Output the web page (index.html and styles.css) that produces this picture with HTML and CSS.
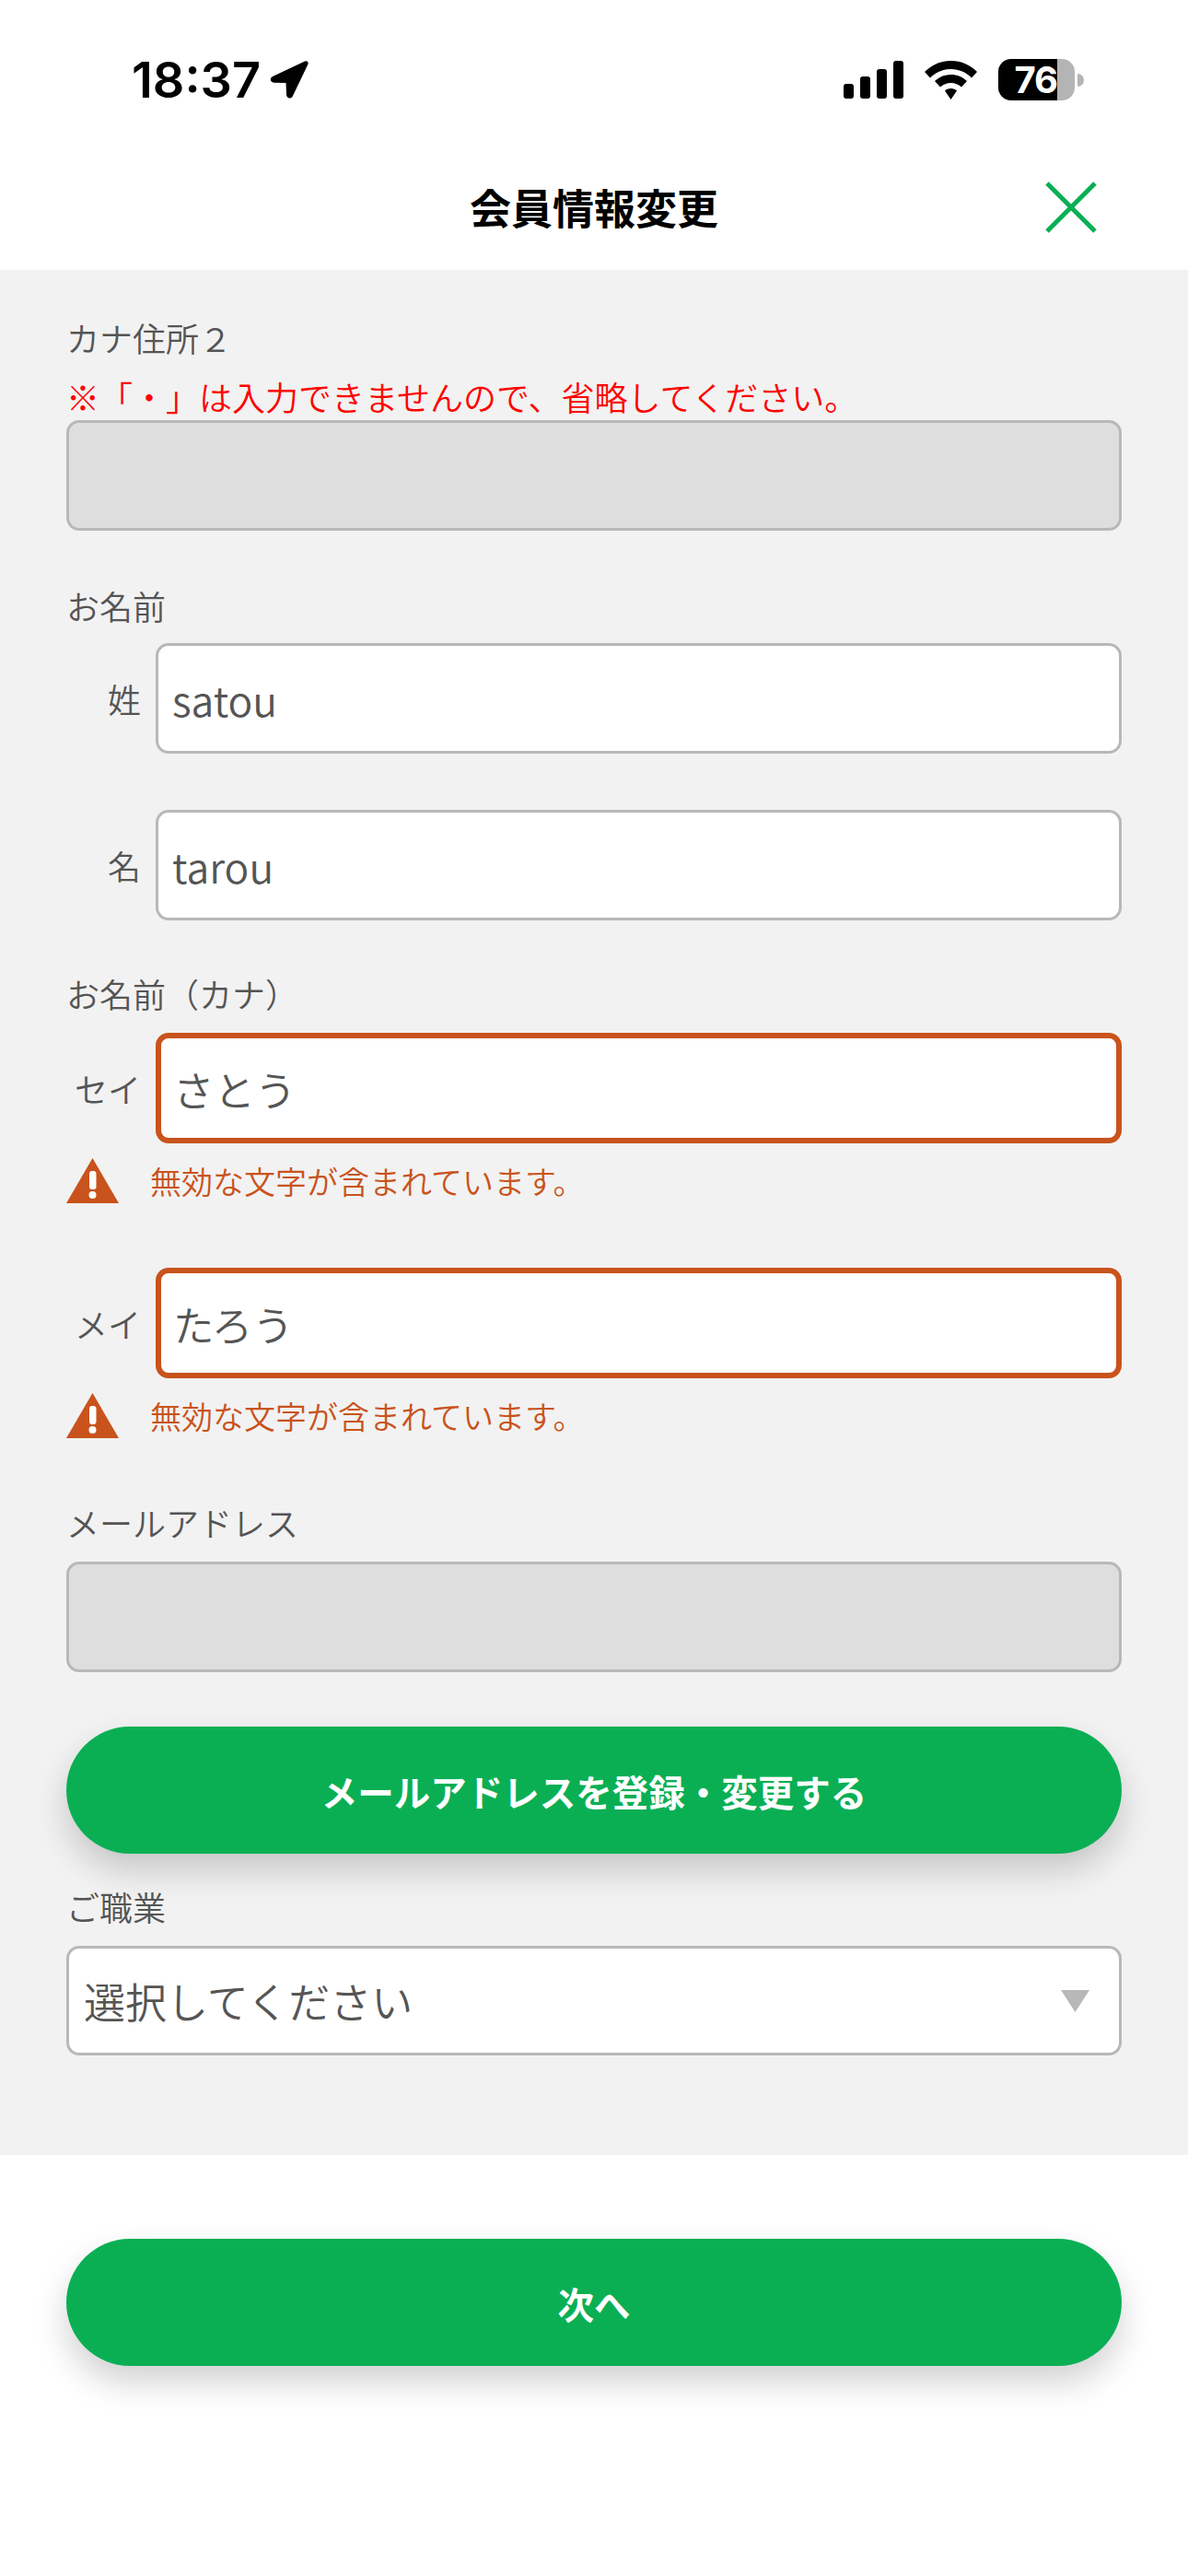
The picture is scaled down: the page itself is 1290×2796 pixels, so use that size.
FILE: index.html
```html
<!DOCTYPE html>
<html lang="ja">
<head>
    <meta charset="UTF-8">
    <meta name="viewport" content="width=device-width, initial-scale=1.0">
    <title>会員情報変更</title>
    <link rel="stylesheet" href="styles.css">
</head>
<body>
    <div class="statusBar">
        <div class="statusLeft">
            <span class="clock">18:37</span>
            <svg class="locationIcon" viewBox="0 0 42 41"><path d="M38 0.5 L3 17 C-0.5 18.8 0.3 23.6 4.5 23.7 L17.5 24 L18 36.5 C18.2 41.3 23.2 42 25 38 L41.3 4 C42.5 1.4 40.5 -0.6 38 0.5 Z"/></svg>
        </div>
        <div class="statusRight">
            <svg class="signalIcon" viewBox="0 0 65 41"><rect x="0" y="25" width="11" height="16" rx="3"/><rect x="18" y="17" width="11" height="24" rx="3"/><rect x="36" y="9" width="11" height="32" rx="3"/><rect x="54" y="0" width="11" height="41" rx="3"/></svg>
            <svg class="wifiIcon" viewBox="0 0 57 42"><path d="M28.5 0 C40 0 49.5 4.5 57 12 L51 18.5 C45 12.5 37.5 9 28.5 9 C19.5 9 12 12.5 6 18.5 L0 12 C7.5 4.5 17 0 28.5 0 Z"/><path d="M28.5 15 C35.5 15 41 17.5 46 22 L40 28.5 C36.5 25.5 33 24 28.5 24 C24 24 20.5 25.5 17 28.5 L11 22 C16 17.5 21.5 15 28.5 15 Z"/><path d="M28.5 30 C31.5 30 33.5 31 35 32.5 L28.5 42 L22 32.5 C23.5 31 25.5 30 28.5 30 Z"/></svg>
            <div class="battery">
                <div class="batteryBody"><span class="batteryLevel">76</span></div>
                <div class="batteryNub"></div>
            </div>
        </div>
    </div>

    <header class="titleBar">
        <h1>会員情報変更</h1>
        <svg class="closeIcon" viewBox="0 0 56 56"><path d="M2 2 L54 54 M54 2 L2 54"/></svg>
    </header>

    <main class="formArea">
        <div class="fieldLabel">カナ住所２</div>
        <div class="noteText">※「・」は入力できませんので、省略してください。</div>
        <div class="inputBox disabled"></div>

        <div class="fieldLabel groupLabel">お名前</div>
        <div class="nameRow">
            <span class="rowLabel">姓</span>
            <div class="inputBox">satou</div>
        </div>
        <div class="nameRow nextRow">
            <span class="rowLabel">名</span>
            <div class="inputBox">tarou</div>
        </div>

        <div class="fieldLabel kanaLabel">お名前（カナ）</div>
        <div class="nameRow">
            <span class="rowLabel">セイ</span>
            <div class="inputBox invalid">さとう</div>
        </div>
        <div class="errorRow">
            <svg class="warnIcon" viewBox="0 0 57 49"><path d="M28.5 0 L57 49 L0 49 Z" fill="#c9531c"/><rect x="25" y="14" width="7.5" height="20" rx="3" fill="#fff"/><circle cx="28.5" cy="40" r="4" fill="#fff"/></svg>
            <span class="errorText">無効な文字が含まれています。</span>
        </div>
        <div class="nameRow invalidNext">
            <span class="rowLabel">メイ</span>
            <div class="inputBox invalid">たろう</div>
        </div>
        <div class="errorRow">
            <svg class="warnIcon" viewBox="0 0 57 49"><path d="M28.5 0 L57 49 L0 49 Z" fill="#c9531c"/><rect x="25" y="14" width="7.5" height="20" rx="3" fill="#fff"/><circle cx="28.5" cy="40" r="4" fill="#fff"/></svg>
            <span class="errorText">無効な文字が含まれています。</span>
        </div>

        <div class="fieldLabel mailLabel">メールアドレス</div>
        <div class="inputBox disabled"></div>
        <button type="button" class="pillButton mailButton">メールアドレスを登録・変更する</button>

        <div class="fieldLabel jobLabel">ご職業</div>
        <div class="inputBox selectBox">
            <span>選択してください</span>
            <svg class="selectArrow" viewBox="0 0 31 24"><path d="M0 0 H31 L15.5 24 Z"/></svg>
        </div>
    </main>

    <footer class="footerArea">
        <button type="button" class="pillButton">次へ</button>
    </footer>
</body>
</html>
```

FILE: styles.css
```css
* {
    box-sizing: border-box;
}

body {
    font-family: "Noto Sans CJK JP", sans-serif;
    font-weight: 350;
    background-color: #ffffff;
    color: #555555;
    margin: 0;
    padding: 0;
}

.statusBar {
    display: flex;
    justify-content: space-between;
    align-items: center;
    height: 173px;
    padding: 0 113px 0 143px;
}

.statusLeft, .statusRight {
    display: flex;
    align-items: center;
}

.clock {
    font-family: Inter, sans-serif;
    font-size: 54px;
    font-weight: 600;
    color: #000000;
}

.locationIcon {
    width: 42px;
    height: 41px;
    margin-left: 10px;
}

.signalIcon {
    width: 65px;
    height: 41px;
}

.wifiIcon {
    width: 57px;
    height: 42px;
    margin-left: 23px;
}

.battery {
    display: flex;
    align-items: center;
    margin-left: 23px;
}

.batteryBody {
    width: 83px;
    height: 45px;
    border-radius: 14px;
    background: linear-gradient(to right, #000000 64px, #b4b4b4 64px);
}

.batteryLevel {
    display: block;
    width: 64px;
    text-align: right;
    font-family: Inter, sans-serif;
    font-size: 40px;
    font-weight: 700;
    letter-spacing: -1px;
    line-height: 45px;
    color: #ffffff;
}

.batteryNub {
    width: 7px;
    height: 14px;
    margin-left: 3px;
    border-radius: 0 7px 7px 0;
    background-color: #b4b4b4;
}

.titleBar {
    display: grid;
    grid-template-columns: 1fr auto 1fr;
    align-items: center;
    height: 120px;
    padding: 0 99px 16px 0;
}

.titleBar h1 {
    grid-column: 2;
    margin: 0 0 0 99px;
    font-size: 45px;
    font-weight: 700;
    line-height: 60px;
    color: #000000;
}

.closeIcon {
    grid-column: 3;
    justify-self: end;
    width: 56px;
    height: 56px;
    fill: none;
    stroke: #0aaf54;
    stroke-width: 5;
}

.formArea {
    background-color: #f2f2f2;
    padding: 48px 72px 108px;
}

.fieldLabel {
    font-size: 36px;
    line-height: 50px;
}

.noteText {
    margin-top: 14px;
    margin-bottom: 1px;
    font-size: 36px;
    line-height: 50px;
    color: #ff0000;
    white-space: nowrap;
}

.inputBox {
    display: flex;
    align-items: center;
    flex: 1;
    height: 120px;
    padding: 0 15px;
    border: 3px solid #b8b8b8;
    border-radius: 14px;
    background-color: #ffffff;
    font-size: 44.5px;
}

.inputBox.disabled {
    background-color: #dedede;
}

.inputBox.invalid {
    padding: 0 13px;
    border: 6px solid #c9531c;
}

.groupLabel {
    margin-top: 56px;
    margin-bottom: 16px;
}

.kanaLabel {
    margin-top: 54px;
    margin-bottom: 18px;
}

.mailLabel {
    margin-top: 66px;
    margin-bottom: 18px;
}

.jobLabel {
    margin-top: 32px;
    margin-bottom: 18px;
}

.nameRow {
    display: flex;
    align-items: center;
}

.nextRow {
    margin-top: 61px;
}

.invalidNext {
    margin-top: 70px;
}

.rowLabel {
    width: 81px;
    margin-right: 16px;
    text-align: right;
    font-size: 36px;
}

.errorRow {
    display: flex;
    align-items: center;
    margin-top: 16px;
    height: 49px;
}

.warnIcon {
    width: 57px;
    height: 49px;
}

.errorText {
    margin-left: 34px;
    font-size: 34px;
    color: #c9531c;
}

.pillButton {
    display: block;
    width: 100%;
    height: 138px;
    border: none;
    border-radius: 69px;
    background-color: #0aaf54;
    color: #ffffff;
    font-family: inherit;
    font-size: 39.5px;
    font-weight: 700;
    box-shadow: 0 18px 36px rgba(0, 0, 0, 0.18);
}

.mailButton {
    margin-top: 59px;
}

.selectBox {
    justify-content: space-between;
    height: 119px;
    padding-left: 16px;
    padding-right: 32px;
    font-size: 45px;
}

.selectArrow {
    width: 31px;
    height: 24px;
    fill: #b8b8b8;
}

.footerArea {
    padding: 91px 72px 227px;
}
```
